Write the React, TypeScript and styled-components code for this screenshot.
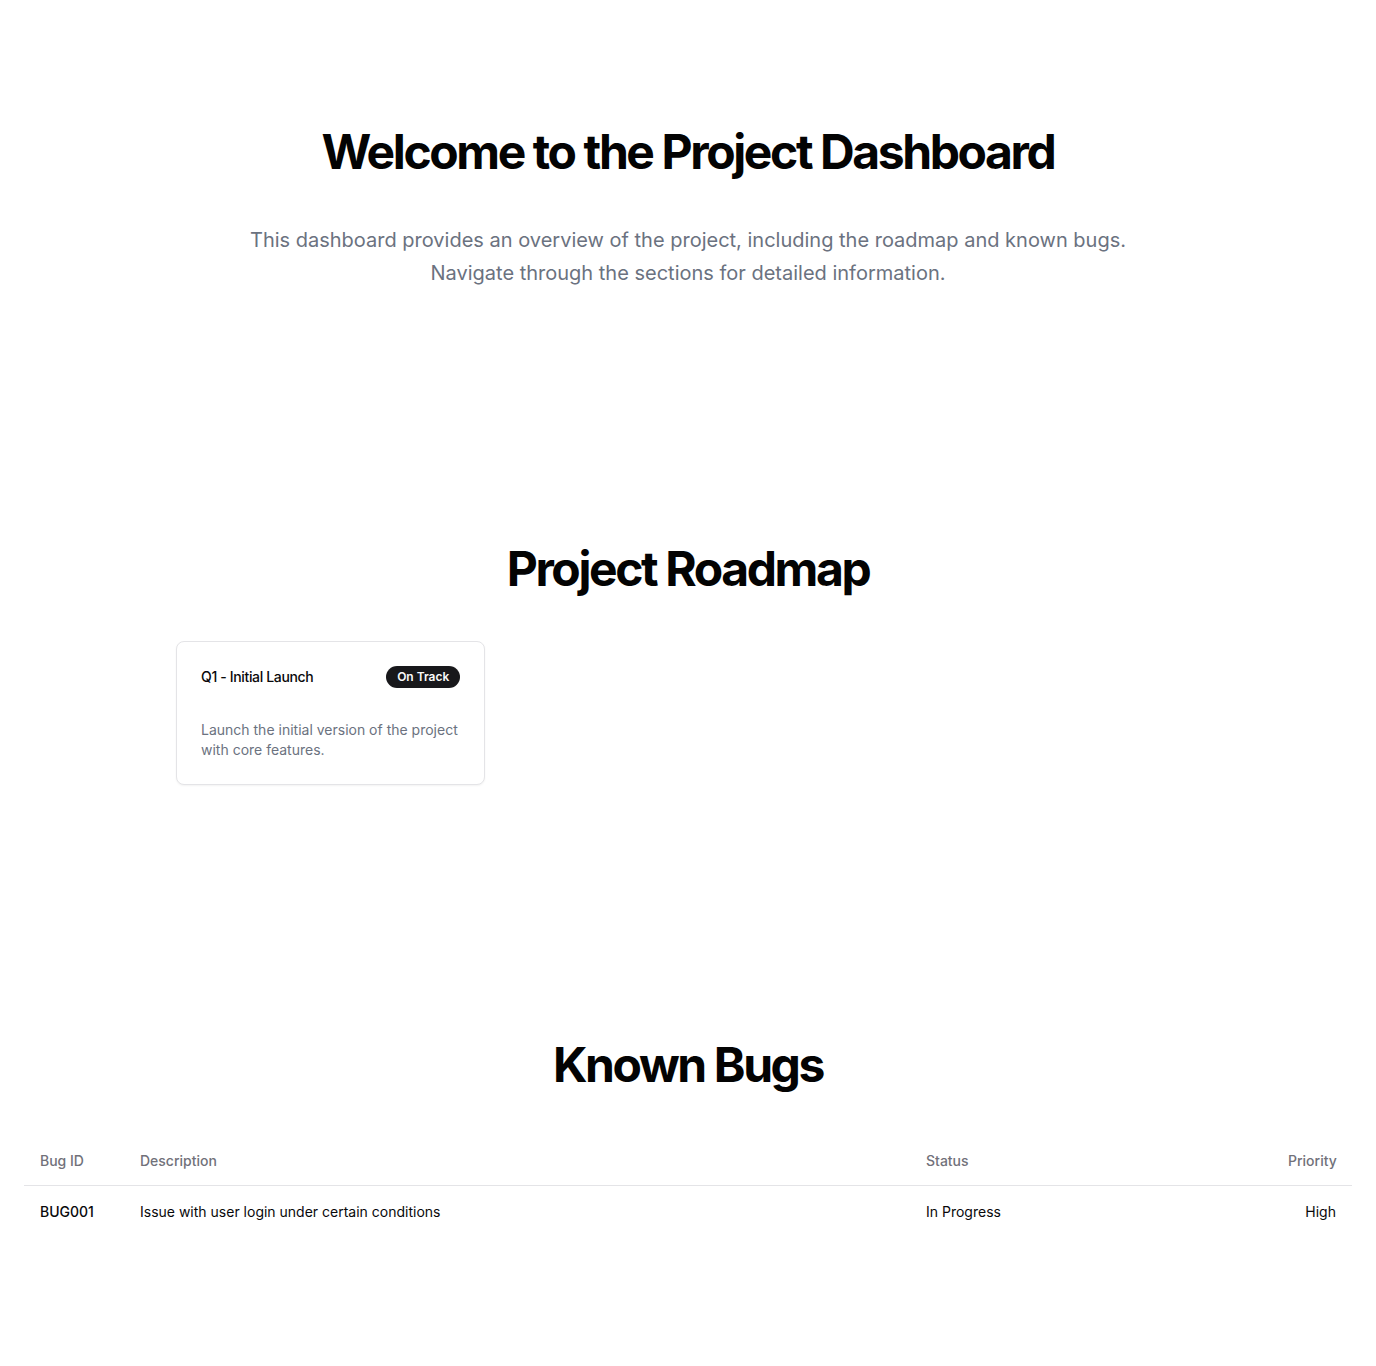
import React from "react";
import styled, { createGlobalStyle } from "styled-components";

const Global = createGlobalStyle`
  * { box-sizing: border-box; }
  html, body { margin: 0; padding: 0; background: #ffffff; }
  body {
    font-family: Inter, "Noto Sans", "Liberation Sans", sans-serif;
    color: #09090b;
    -webkit-font-smoothing: antialiased;
  }
`;

const Main = styled.main`
  display: flex;
  flex-direction: column;
  width: 100%;
`;

const Section = styled.section`
  padding: 128px 0;
  width: 100%;
`;

const Container = styled.div`
  display: flex;
  flex-direction: column;
  align-items: center;
  padding: 0 24px;
`;

const Heading = styled.h1`
  margin: 0;
  font-size: 48px;
  line-height: 1;
  font-weight: 700;
  letter-spacing: -0.05em;
  color: #030303;
  text-align: center;
`;

const Lead = styled.p`
  margin: 48px 0 0;
  max-width: 900px;
  font-size: 20px;
  line-height: 32.5px;
  color: #6b7280;
  text-align: center;
`;

const CardGrid = styled.div`
  display: grid;
  grid-template-columns: repeat(3, 1fr);
  gap: 48px;
  width: 100%;
  max-width: 1024px;
  margin-top: 48px;
`;

const Card = styled.div`
  border: 1px solid #e4e4e7;
  border-radius: 8px;
  background: #ffffff;
  box-shadow: 0 1px 2px rgba(0, 0, 0, 0.05);
  padding: 24px;
  display: flex;
  flex-direction: column;
  gap: 32px;
`;

const CardHeader = styled.div`
  display: flex;
  align-items: center;
  justify-content: space-between;
`;

const CardTitle = styled.h3`
  margin: 0;
  font-size: 14px;
  line-height: 20px;
  font-weight: 500;
  letter-spacing: -0.025em;
  color: #09090b;
`;

const Badge = styled.span`
  display: inline-flex;
  align-items: center;
  height: 22px;
  padding: 0 11px;
  border-radius: 9999px;
  background: #18181b;
  color: #fafafa;
  font-size: 12px;
  font-weight: 600;
  line-height: 16px;
`;

const CardText = styled.p`
  margin: 0;
  font-size: 14px;
  line-height: 20px;
  color: #6b7280;
`;

const Table = styled.table`
  width: 100%;
  margin-top: 48px;
  border-collapse: collapse;
  table-layout: fixed;
  font-size: 14px;
`;

const HeadRow = styled.tr`
  border-bottom: 1px solid #e4e4e7;
`;

const Th = styled.th<{ $right?: boolean }>`
  height: 48px;
  padding: 0 16px;
  text-align: ${(p) => (p.$right ? "right" : "left")};
  font-weight: 500;
  color: #71717a;
  vertical-align: middle;
`;

const Td = styled.td<{ $right?: boolean; $strong?: boolean }>`
  padding: 16px;
  line-height: 20px;
  text-align: ${(p) => (p.$right ? "right" : "left")};
  font-weight: ${(p) => (p.$strong ? 500 : 400)};
  color: #09090b;
  vertical-align: middle;
`;

export default function App() {
  return (
    <>
      <Global />
      <Main>
        <Section>
          <Container>
            <Heading>Welcome to the Project Dashboard</Heading>
            <Lead>
              This dashboard provides an overview of the project, including the roadmap and known bugs.
              Navigate through the sections for detailed information.
            </Lead>
          </Container>
        </Section>
        <Section>
          <Container>
            <Heading as="h2">Project Roadmap</Heading>
            <CardGrid>
              <Card>
                <CardHeader>
                  <CardTitle>Q1 - Initial Launch</CardTitle>
                  <Badge>On Track</Badge>
                </CardHeader>
                <CardText>Launch the initial version of the project with core features.</CardText>
              </Card>
            </CardGrid>
          </Container>
        </Section>
        <Section>
          <Container>
            <Heading as="h2">Known Bugs</Heading>
            <Table>
              <colgroup>
                <col style={{ width: 100 }} />
                <col />
                <col style={{ width: 362 }} />
                <col style={{ width: 80 }} />
              </colgroup>
              <thead>
                <HeadRow>
                  <Th>Bug ID</Th>
                  <Th>Description</Th>
                  <Th>Status</Th>
                  <Th $right>Priority</Th>
                </HeadRow>
              </thead>
              <tbody>
                <tr>
                  <Td $strong>BUG001</Td>
                  <Td>Issue with user login under certain conditions</Td>
                  <Td>In Progress</Td>
                  <Td $right>High</Td>
                </tr>
              </tbody>
            </Table>
          </Container>
        </Section>
      </Main>
    </>
  );
}
